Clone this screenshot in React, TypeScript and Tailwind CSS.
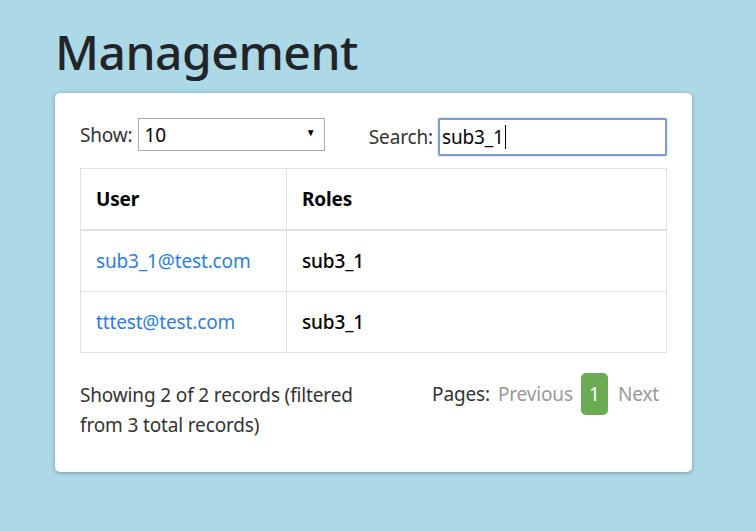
export default function App() {
  const rows = [
    { user: "sub3_1@test.com", roles: "sub3_1" },
    { user: "tttest@test.com", roles: "sub3_1" },
  ]
  return (
    <div className="min-h-[531px] w-[756px] bg-[#add8e6] pt-[22px] text-[19px] leading-[30px] tracking-[-0.15px] text-[#212529]" style={{ fontFamily: '"Noto Sans", "Open Sans", sans-serif' }}>
      <h1 className="ml-[55px] text-[48px] leading-[60px] font-medium tracking-[-0.5px] text-[#212529] mb-[11px]">Management</h1>

      <div className="ml-[55px] w-[637px] rounded-[5px] bg-white px-[25px] pt-[25px] pb-[32px] shadow-[0_1px_4px_rgba(0,0,0,0.3)]">
        {/* top controls */}
        <div className="flex items-start justify-between">
          <div className="flex items-center">
            <span className="mr-[5px] text-[#333]">Show:</span>
            <div className="relative flex h-[33px] w-[187px] items-center border border-[#a9a9a9] bg-white pl-[6px] text-black">
              10
              <span className="absolute right-[8px] top-[3px] text-[10px] leading-[20px] text-black">▼</span>
            </div>
          </div>
          <div className="flex items-center">
            <span className="mr-[5px] text-[#333]">Search:</span>
            <div className="flex h-[38px] w-[229px] items-center rounded-[2px] border-2 border-[#7b9bd1] bg-white pl-[2px] text-black shadow-[0_0_2px_rgba(80,120,200,0.5)]">
              sub3_1<span className="ml-[1px] inline-block h-[24px] w-[1px] bg-black"></span>
            </div>
          </div>
        </div>

        {/* table */}
        <table className="mt-[12px] w-full border-collapse border border-[#dee2e6]">
          <thead>
            <tr className="border-b-2 border-[#dee2e6]">
              <th className="w-[206px] border-r border-[#dee2e6] p-[15px] text-left font-bold text-black">User</th>
              <th className="p-[15px] text-left font-bold text-black">Roles</th>
            </tr>
          </thead>
          <tbody>
            {rows.map((r, i) => (
              <tr key={i} className="border-t border-[#dee2e6]">
                <td className="border-r border-[#dee2e6] p-[15px] text-[#2f7de0]">{r.user}</td>
                <td className="p-[15px] font-medium text-black">{r.roles}</td>
              </tr>
            ))}
          </tbody>
        </table>

        {/* footer */}
        <div className="mt-[20px] flex items-start">
          <div className="w-1/2 pt-[7px] pr-[10px] text-[#333]">Showing 2 of 2 records (filtered from 3 total records)</div>
          <div className="flex w-1/2 items-center justify-end pr-[8px]">
            <span className="mr-[8px] text-[#333]">Pages:</span>
            <span className="mr-[8px] text-[#999]">Previous</span>
            <span className="flex h-[42px] w-[27px] items-center justify-center rounded-[5px] bg-[#6aab54] text-white">1</span>
            <span className="ml-[10px] text-[#999]">Next</span>
          </div>
        </div>
      </div>
    </div>
  )
}
